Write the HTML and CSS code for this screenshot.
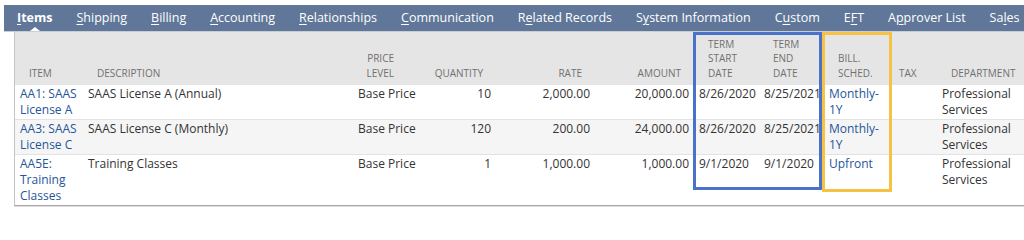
FILE: index.html
```html
<!DOCTYPE html>
<html>
<head>
<meta charset="utf-8">
<link rel="stylesheet" href="styles.css">
</head>
<body>
<div class="page">
  <nav class="tabs">
    <span class="tab active"><u>I</u>tems</span>
    <span class="tab"><u>S</u>hipping</span>
    <span class="tab"><u>B</u>illing</span>
    <span class="tab"><u>A</u>ccounting</span>
    <span class="tab"><u>R</u>elationships</span>
    <span class="tab"><u>C</u>ommunication</span>
    <span class="tab">R<u>e</u>lated Records</span>
    <span class="tab">S<u>y</u>stem Information</span>
    <span class="tab">C<u>u</u>stom</span>
    <span class="tab">E<u>F</u>T</span>
    <span class="tab">A<u>p</u>prover List</span>
    <span class="tab">Sa<u>l</u>es</span>
  </nav>
  <div class="sheet">
    <table class="grid">
      <colgroup>
        <col class="c-item"><col class="c-desc"><col class="c-price"><col class="c-qty"><col class="c-rate"><col class="c-amt"><col class="c-start"><col class="c-end"><col class="c-bill"><col class="c-tax"><col class="c-dept">
      </colgroup>
      <thead>
        <tr>
          <th>Item</th>
          <th>Description</th>
          <th class="r pr">Price<br>Level</th>
          <th class="r">Quantity</th>
          <th class="r">Rate</th>
          <th class="r">Amount</th>
          <th>Term<br>Start<br>Date</th>
          <th>Term<br>End<br>Date</th>
          <th>Bill.<br>Sched.</th>
          <th class="tx">Tax</th>
          <th>Department</th>
        </tr>
      </thead>
      <tbody>
        <tr>
          <td><a>AA1: SAAS License A</a></td>
          <td>SAAS License A (Annual)</td>
          <td class="nw">Base Price</td>
          <td class="r">10</td>
          <td class="r">2,000.00</td>
          <td class="r">20,000.00</td>
          <td class="nw">8/26/2020</td>
          <td class="nw">8/25/2021</td>
          <td><a>Monthly-1Y</a></td>
          <td></td>
          <td>Professional Services</td>
        </tr>
        <tr class="alt">
          <td><a>AA3: SAAS License C</a></td>
          <td>SAAS License C (Monthly)</td>
          <td class="nw">Base Price</td>
          <td class="r">120</td>
          <td class="r">200.00</td>
          <td class="r">24,000.00</td>
          <td class="nw">8/26/2020</td>
          <td class="nw">8/25/2021</td>
          <td><a>Monthly-1Y</a></td>
          <td></td>
          <td>Professional Services</td>
        </tr>
        <tr>
          <td><a>AA5E: Training Classes</a></td>
          <td>Training Classes</td>
          <td class="nw">Base Price</td>
          <td class="r">1</td>
          <td class="r">1,000.00</td>
          <td class="r">1,000.00</td>
          <td class="nw">9/1/2020</td>
          <td class="nw">9/1/2020</td>
          <td><a>Upfront</a></td>
          <td></td>
          <td>Professional Services</td>
        </tr>
      </tbody>
    </table>
  </div>
  <div class="mark mark-blue"></div>
  <div class="mark mark-orange"></div>
</div>
</body>
</html>
```
FILE: styles.css
```css
html, body {
  margin: 0;
  padding: 0;
  background: #ffffff;
}
body {
  font-family: "Open Sans", "Liberation Sans", sans-serif;
  color: #333333;
}
.page {
  position: relative;
  width: 1024px;
  height: 214px;
  overflow: hidden;
  padding-top: 5px;
  box-sizing: border-box;
}
.tabs {
  display: flex;
  align-items: center;
  height: 26px;
  margin-left: 4px;
  padding-left: 1px;
  background: #607799;
  border-bottom: 1px solid #c9ced6;
  white-space: nowrap;
  overflow: hidden;
}
.tab {
  position: relative;
  flex: none;
  padding: 0 12px;
  font-size: 12.5px;
  color: #ffffff;
  line-height: 26px;
}
.tab u {
  text-decoration-thickness: 1px;
  text-underline-offset: 2px;
}
.tab.active {
  font-weight: 700;
}
.tab.active::after {
  content: "";
  position: absolute;
  left: 50%;
  bottom: 0;
  margin-left: -5px;
  border-left: 5px solid transparent;
  border-right: 5px solid transparent;
  border-bottom: 4px solid #ffffff;
}
.sheet {
  margin-left: 14px;
  border-left: 1px solid #c4c4c4;
  border-bottom: 1px solid #a8a8a8;
  box-shadow: 0 1px 0 #dcdcdc;
  width: 1010px;
}
.grid {
  table-layout: fixed;
  border-collapse: collapse;
  width: 1009px;
  font-size: 12px;
}
.c-item { width: 68px; }
.c-desc { width: 270px; }
.c-price { width: 67px; }
.c-qty { width: 76px; }
.c-rate { width: 99px; }
.c-amt { width: 99px; }
.c-start { width: 65px; }
.c-end { width: 65px; }
.c-bill { width: 62px; }
.c-tax { width: 51px; }
.c-dept { width: 87px; }

.grid thead tr {
  background: #e5e5e5;
  height: 53px;
}
.grid th {
  vertical-align: bottom;
  text-align: left;
  font-weight: 400;
  font-size: 10px;
  line-height: 14.5px;
  text-transform: uppercase;
  color: #707070;
  padding: 0 6px 5px 14px;
}
.grid th.r {
  text-align: right;
  padding-left: 4px;
  padding-right: 13px;
}
.grid th.r.pr {
  padding-right: 26px;
}
.grid th.tx {
  padding-left: 13px;
}
.grid td {
  vertical-align: top;
  line-height: 16px;
  padding: 1px 5px 1px 5px;
  color: #333333;
  border-top: 1px solid #e3e3e3;
}
.grid td.nw {
  white-space: nowrap;
  padding-right: 0;
}
.grid tbody tr:first-child td {
  border-top: none;
}
.grid td.r {
  text-align: right;
}
.grid tr.alt td {
  background: #f5f5f5;
}
.grid a {
  color: #255599;
  text-decoration: none;
}
.grid tbody tr:last-child td {
  height: 48px;
}
.mark {
  position: absolute;
  top: 32px;
  box-sizing: border-box;
  border: 3px solid;
}
.mark-blue {
  left: 693px;
  width: 129px;
  height: 158px;
  border-color: #4a72c8;
}
.mark-orange {
  left: 822px;
  width: 70px;
  height: 160px;
  border-color: #f7c244;
}
```
